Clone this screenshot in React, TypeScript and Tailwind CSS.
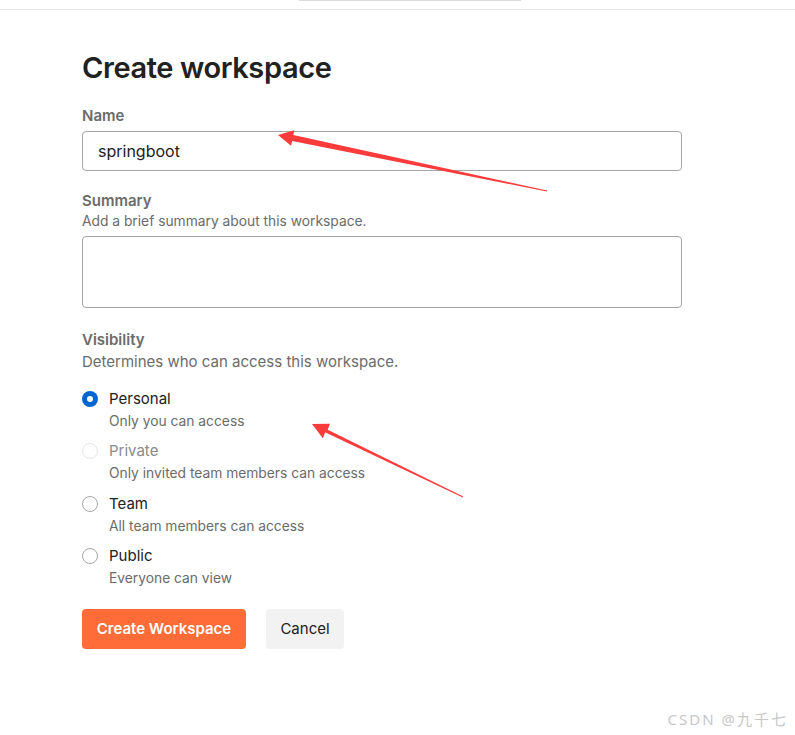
import React from "react";

const font = { fontFamily: "Inter, 'Noto Sans', sans-serif" };

function Radio({ state }: { state: "checked" | "disabled" | "normal" }) {
  if (state === "checked")
    return (
      <span className="w-[16px] h-[16px] rounded-full bg-[#0265d2] flex items-center justify-center shrink-0">
        <span className="w-[6px] h-[6px] rounded-full bg-white" />
      </span>
    );
  return (
    <span
      className={
        "w-[16px] h-[16px] rounded-full border shrink-0 bg-white " +
        (state === "disabled" ? "border-[#e6e6e6]" : "border-[#a6a6a6]")
      }
    />
  );
}

const options: { label: string; desc: string; state: "checked" | "disabled" | "normal"; extra: string }[] = [
  { label: "Personal", desc: "Only you can access", state: "checked", extra: "" },
  { label: "Private", desc: "Only invited team members can access", state: "disabled", extra: "" },
  { label: "Team", desc: "All team members can access", state: "normal", extra: "mt-[1px]" },
  { label: "Public", desc: "Everyone can view", state: "normal", extra: "" },
];

export default function App() {
  return (
    <div className="relative w-[795px] h-[735px] bg-white overflow-hidden" style={font}>
      <div className="h-[10px] border-b border-[#e6e6e6] flex justify-center">
        <div className="w-[222px] h-[1px] bg-[#dcdcdc] ml-[24px]" />
      </div>
      <div className="pl-[82px] w-[682px] pt-[40px]">
        <h1 className="text-[29px] leading-[36px] font-semibold text-[#212121] tracking-[-0.4px]">
          Create workspace
        </h1>
        <div className="mt-[21px] text-[15px] leading-[18px] font-semibold text-[#6b6b6b]">Name</div>
        <div className="mt-[6px] h-[40px] border border-[#a6a6a6] rounded-[4px] flex items-center px-[15px] text-[16px] text-[#212121]">
          springboot
        </div>
        <div className="mt-[21px] text-[15px] leading-[18px] font-semibold text-[#6b6b6b]">Summary</div>
        <div className="mt-[3px] text-[13.8px] leading-[17px] text-[#6b6b6b]">
          Add a brief summary about this workspace.
        </div>
        <div className="mt-[6px] h-[72px] border border-[#a6a6a6] rounded-[4px]" />
        <div className="mt-[23px] text-[15px] leading-[18px] font-semibold text-[#6b6b6b]">Visibility</div>
        <div className="mt-[4px] text-[15px] leading-[18px] text-[#6b6b6b]">
          Determines who can access this workspace.
        </div>
        <div className="mt-[18px] flex flex-col gap-[10px]">
          {options.map((o) => (
            <div key={o.label} className={"flex flex-col " + o.extra}>
              <div className="flex items-center gap-[11px] h-[20px]">
                <Radio state={o.state} />
                <span
                  className={
                    "text-[15px] leading-[20px] " +
                    (o.state === "disabled" ? "text-[#8a8a8a]" : "text-[#212121]")
                  }
                >
                  {o.label}
                </span>
              </div>
              <div className="pl-[27px] mt-[2px] text-[13.8px] leading-[20px] text-[#6b6b6b]">{o.desc}</div>
            </div>
          ))}
        </div>
        <div className="mt-[21px] flex gap-[20px]">
          <button className="h-[40px] w-[164px] rounded-[4px] bg-[#ff6c37] text-white text-[15px] font-semibold">
            Create Workspace
          </button>
          <button className="h-[40px] w-[78px] rounded-[4px] bg-[#f2f2f2] text-[#212121] text-[15px]">
            Cancel
          </button>
        </div>
      </div>

      <svg className="absolute left-0 top-0 pointer-events-none" width="795" height="735">
        <polygon
          fill="#f93b3b"
          points="278,135 294.3,130.2 293.3,135.1 547.1,190.5 546.9,191.5 292.1,140.9 291.1,145.8"
        />
        <polygon
          fill="#f93b3b"
          points="312,424 329.9,423.8 327.7,429.7 463.2,496.6 462.8,497.4 325.1,432.3 322.9,438.2"
        />
      </svg>

      <div
        className="absolute right-[7px] bottom-[5px] text-[15px] tracking-[2px] text-[#c8c8c8]"
        style={{ fontFamily: "'Noto Sans', 'Noto Sans CJK SC', sans-serif" }}
      >
        CSDN @九千七
      </div>
    </div>
  );
}
